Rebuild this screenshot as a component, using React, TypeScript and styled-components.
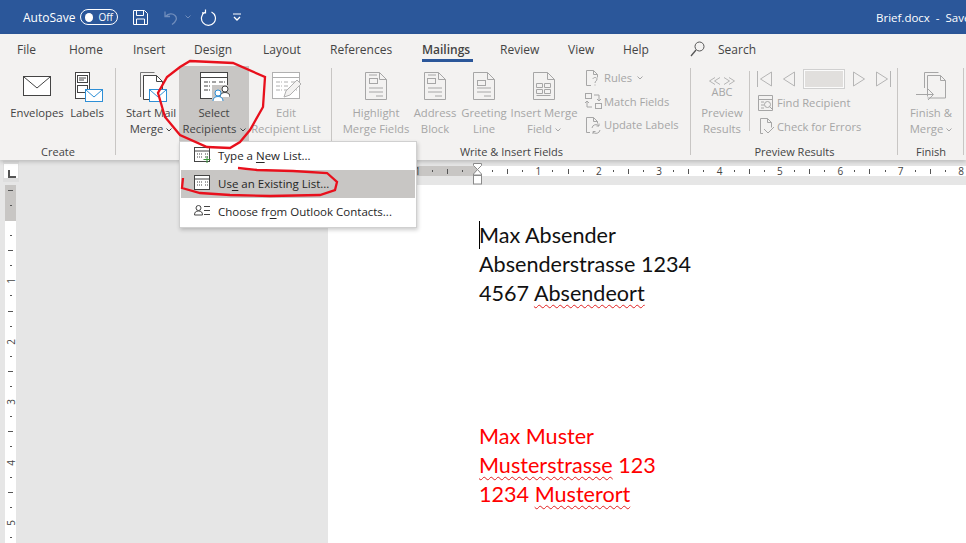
import React from "react";
import styled, { createGlobalStyle } from "styled-components";

const UI_FONT = `"Open Sans", "Noto Sans", sans-serif`;
const TEXT = "#444444";
const MUTED = "#a6a6a6";
const INCH = 60.4;

const GlobalStyle = createGlobalStyle`
  html, body {
    margin: 0;
    padding: 0;
    overflow: hidden;
    background: #e6e6e6;
  }
  * { box-sizing: border-box; }
`;

function EnvelopeIcon() {
  return (
    <svg width="32" height="32" viewBox="0 0 32 32" fill="none" stroke="#444">
      <rect x="2.5" y="6.5" width="27" height="19" fill="#fff" />
      <path d="M3 7l13 11L29 7" />
    </svg>
  );
}

function MiniEnvelope({ x, y }: { x: number; y: number }) {
  return (
    <g transform={`translate(${x} ${y})`}>
      <rect x="0.5" y="0.5" width="17" height="12" fill="#fff" stroke="#2e8fd6" />
      <path d="M1 1l8 7 8-7" stroke="#2e8fd6" fill="none" />
    </g>
  );
}

function LabelsIcon() {
  return (
    <svg width="32" height="32" viewBox="0 0 32 32" fill="none" stroke="#444">
      <rect x="4.5" y="2.5" width="14" height="26" fill="#fff" />
      <rect x="6.5" y="5.5" width="10" height="7" />
      <path d="M8 8h7M8 10h5" />
      <rect x="6.5" y="15.5" width="10" height="7" />
      <MiniEnvelope x={14} y={19} />
    </svg>
  );
}

function StartMergeIcon() {
  return (
    <svg width="32" height="32" viewBox="0 0 32 32" fill="none" stroke="#444">
      <path d="M5.5 27V2.5h14" stroke="#777" />
      <path d="M8.5 29.5V5.5h13l6 6v18z" fill="#fff" />
      <path d="M21.5 5.5v6h6" />
      <MiniEnvelope x={14} y={19} />
    </svg>
  );
}

function TableIcon({ color = "#444" }: { color?: string }) {
  return (
    <g stroke={color}>
      <rect x="2.5" y="2.5" width="27" height="26" fill="#fff" />
      <path d="M3 7.5h26" />
      <path d="M6 12h6M14 12h5M21 12h6M6 16h6M14 16h5M21 16h6M6 20h6M14 20h5M21 20h6" strokeDasharray="4 1" />
    </g>
  );
}

function SelectRecipientsIcon() {
  return (
    <svg width="32" height="32" viewBox="0 0 32 32" fill="none">
      <TableIcon />
      <rect x="14" y="15" width="18" height="17" fill="#c8c6c4" />
      <circle cx="27" cy="19" r="3" stroke="#444" fill="#fff" />
      <path d="M22 27c0-3 2-4.500 5-4.500s5 1.500 5 4.500" stroke="#444" fill="#fff" />
      <circle cx="20" cy="23" r="3" stroke="#2e8fd6" fill="#fff" />
      <path d="M15 31c0-3 2-4.500 5-4.500s5 1.500 5 4.500" stroke="#2e8fd6" fill="#fff" />
    </svg>
  );
}

function EditListIcon() {
  return (
    <svg width="32" height="32" viewBox="0 0 32 32" fill="none">
      <TableIcon color="#b0b0b0" />
      <path d="M14 27l2-6L27 10l4 4-11 11z" fill="#f3f2f1" stroke="#b0b0b0" />
    </svg>
  );
}

type FieldKind = "highlight" | "address" | "greeting" | "insert";

function FieldDocIcon({ kind }: { kind: FieldKind }) {
  return (
    <svg width="32" height="32" viewBox="0 0 32 32" fill="none" stroke="#a6a6a6">
      <path d="M5.500 29.500V2.500h14l7 7v20z" fill="#f3f2f1" />
      <path d="M19.500 2.500v7h7" />
      {kind === "insert" ? (
        <path d="M8.500 13.500h6v4h-6zM16.500 13.500h6v4h-6zM8.500 19.500h6v4h-6zM16.500 19.500h6v4h-6zM8.500 25.500h14" />
      ) : (
        <>
          <rect x={kind === "address" ? 8.5 : 9.5} y={kind === "greeting" ? 10.5 : 8.5} width="8" height="5" />
          <path d="M9 18h14M9 22h14M16 26h7" />
          {kind !== "greeting" && <path d="M9 5h8" />}
        </>
      )}
    </svg>
  );
}

function RulesIcon() {
  return (
    <svg width="18" height="18" viewBox="0 0 18 18" fill="none" stroke="#a6a6a6">
      <path d="M7 16.500H2.500V1.500h7l4 4v3M9.500 1.500v4h4" />
      <path d="M9 10c0-2 4-2 4 0 0 2-2 2-2 4M11 15.500v1" />
    </svg>
  );
}

function MatchIcon() {
  return (
    <svg width="18" height="18" viewBox="0 0 18 18" fill="none" stroke="#a6a6a6">
      <rect x="1.500" y="1.500" width="6" height="5" />
      <rect x="11.500" y="11.500" width="6" height="5" />
      <path d="M10 3h5v6M13 7l2 2 2-2M8 15H3V9M1 11l2-2 2 2" />
    </svg>
  );
}

function UpdateIcon() {
  return (
    <svg width="18" height="18" viewBox="0 0 18 18" fill="none" stroke="#a6a6a6">
      <path d="M6 16.500H2.500V1.500h7l4 4v2M9.500 1.500v4h4" />
      <path d="M8 12a4 4 0 0 1 7-2M16 14a4 4 0 0 1-7 2M15 7.500V10h-2.500M9 18v-2.500h2.500" />
    </svg>
  );
}

function FindIcon() {
  return (
    <svg width="18" height="18" viewBox="0 0 18 18" fill="none" stroke="#a6a6a6">
      <path d="M1.500 1.500h14v15h-14zM2 5.500h13" />
      <path d="M4 8h3M4 11h3M4 14h3" />
      <circle cx="10.500" cy="10.500" r="3" fill="#f3f2f1" />
      <path d="M12.500 12.500l3 3" />
    </svg>
  );
}

function CheckIcon() {
  return (
    <svg width="18" height="18" viewBox="0 0 18 18" fill="none" stroke="#a6a6a6">
      <path d="M6 16.500H3.500V1.500h7l4 4v5M10.500 1.500v4h4" />
      <path d="M7 12l4 4 6-6" />
    </svg>
  );
}

function FinishIcon() {
  return (
    <svg width="32" height="32" viewBox="0 0 32 32" fill="none" stroke="#a6a6a6">
      <path d="M9.500 18V2.500h14" />
      <path d="M12.500 26.500V5.500h13l5 5v17.500h-18" fill="#f3f2f1" />
      <path d="M25.500 5.500v5h5" />
      <path d="M1 24.500h17M13 19l5.500 5.500L13 30" />
    </svg>
  );
}

function NavArrow({ dir, bar }: { dir: "left" | "right"; bar?: boolean }) {
  const left = dir === "left";
  return (
    <svg width="16" height="18" viewBox="0 0 16 18" fill="none" stroke="#b5b5b5">
      {left ? <path d="M14.500 2v14L3.500 9z" /> : <path d="M1.500 2v14l11-7z" />}
      {bar && <path d={left ? "M0.500 1v16" : "M15.500 1v16"} />}
    </svg>
  );
}

function SmallTableIcon({ plus }: { plus?: boolean }) {
  return (
    <svg width="18" height="16" viewBox="0 0 18 16" fill="none" stroke="#444">
      <rect x="1.500" y="0.500" width="15" height="14" fill="#fff" />
      <path d="M2 4h14" />
      <path d="M4 7h3M8 7h2M12 7h3M4 10h3M8 10h2M12 10h3" strokeDasharray="1 1" />
      {plus && <path d="M14 9v7M10.500 12.500h7" stroke="#3a9a3a" />}
    </svg>
  );
}

function ContactsIcon() {
  return (
    <svg width="18" height="16" viewBox="0 0 18 16" fill="none" stroke="#444">
      <circle cx="5.500" cy="5" r="2.500" />
      <path d="M1.500 12c0-3 1.500-4 4-4s4 1 4 4z" />
      <path d="M11 3.500h6M11 7.500h6M11 11.500h6" />
    </svg>
  );
}

function PreviewChevrons() {
  return (
    <svg width="26" height="8" viewBox="0 0 26 8" fill="none" stroke="#b5b5b5">
      <path d="M6 0.500L0.500 4 6 7.500M11 0.500L5.500 4 11 7.500M15 0.500L20.500 4 15 7.500M20 0.500L25.500 4 20 7.500" />
    </svg>
  );
}

const Page = styled.div`
  position: relative;
  width: 966px;
  height: 543px;
  overflow: hidden;
  display: flex;
  flex-direction: column;
  font-family: ${UI_FONT};
  font-size: 12px;
  color: ${TEXT};
  background: #e6e6e6;
`;

const TitleBar = styled.div`
  flex: none;
  height: 34px;
  background: #2b579a;
  color: #fff;
  display: flex;
  align-items: center;
  padding-left: 23px;
  white-space: nowrap;
  overflow: hidden;
`;

const AutoSaveLabel = styled.span`
  width: 57px;
  font-size: 12px;
`;

const Toggle = styled.div`
  width: 38px;
  height: 16px;
  border: 1px solid #fff;
  border-radius: 8px;
  display: flex;
  align-items: center;
  padding: 0 4px;
  gap: 5px;
  font-size: 10px;
  margin-right: 14px;
  &::before {
    content: "";
    width: 9px;
    height: 9px;
    border-radius: 50%;
    background: #fff;
  }
`;

const QuickIcon = styled.svg<{ $gap: number }>`
  flex: none;
  margin-right: ${(p) => p.$gap}px;
`;

const DocTitle = styled.span`
  margin-left: auto;
  width: 90px;
  overflow: hidden;
  font-size: 11.5px;
`;

const Ribbon = styled.div`
  flex: none;
  height: 126px;
  background: #f3f2f1;
  box-shadow: 0 2px 4px rgba(0, 0, 0, 0.18);
  position: relative;
  z-index: 1;
`;

const TabRow = styled.div`
  height: 28px;
  display: flex;
  align-items: center;
`;

const Tab = styled.div<{ $width: number; $active?: boolean }>`
  flex: none;
  width: ${(p) => p.$width}px;
  height: 28px;
  line-height: 31px;
  font-size: 12px;
  font-weight: ${(p) => (p.$active ? 600 : 400)};
  white-space: nowrap;
  position: relative;
  ${(p) =>
    p.$active &&
    `&::after {
      content: "";
      position: absolute;
      left: 0;
      top: 25px;
      width: 51px;
      height: 3px;
      background: #2b579a;
    }`}
`;

const TabSpacer = styled.div`
  width: 17px;
`;

const SearchBox = styled.div`
  display: flex;
  align-items: center;
  gap: 13px;
  padding-top: 2px;
`;

const GroupRow = styled.div`
  display: flex;
  height: 98px;
`;

const Group = styled.div<{ $width: number }>`
  flex: none;
  width: ${(p) => p.$width}px;
  display: flex;
  flex-direction: column;
  position: relative;
  &::after {
    content: "";
    position: absolute;
    right: 0;
    top: 6px;
    bottom: 5px;
    width: 1px;
    background: #c8c6c4;
  }
`;

const GroupBody = styled.div<{ $pad?: number }>`
  flex: none;
  height: 82px;
  display: flex;
  padding-top: 4px;
  padding-left: ${(p) => p.$pad ?? 0}px;
`;

const GroupLabel = styled.div`
  text-align: center;
  font-size: 11px;
  line-height: 16px;
`;

const LargeButton = styled.div<{ $width: number; $disabled?: boolean; $active?: boolean; $gap?: number }>`
  flex: none;
  width: ${(p) => p.$width}px;
  height: 75px;
  margin-right: ${(p) => p.$gap ?? 0}px;
  padding-top: 4px;
  display: flex;
  flex-direction: column;
  align-items: center;
  text-align: center;
  font-size: 11.3px;
  line-height: 16px;
  white-space: nowrap;
  color: ${(p) => (p.$disabled ? MUTED : TEXT)};
  background: ${(p) => (p.$active ? "#c8c6c4" : "transparent")};
`;

const LargeIcon = styled.div`
  height: 35px;
  flex: none;
  display: flex;
  justify-content: center;
`;

const Chevron = styled.svg`
  margin-left: 3px;
  vertical-align: 1px;
`;

function Caret({ color = "#444" }: { color?: string }) {
  return (
    <Chevron width="6" height="4" viewBox="0 0 6 4" fill="none" stroke={color}>
      <path d="M0.500 0.500L3 3l2.500-2.500" />
    </Chevron>
  );
}

const SmallColumn = styled.div<{ $left: number }>`
  margin-left: ${(p) => p.$left}px;
  display: flex;
  flex-direction: column;
`;

const SmallButton = styled.div`
  height: 23.500px;
  display: flex;
  align-items: center;
  gap: 2px;
  color: ${MUTED};
  font-size: 11.200px;
  white-space: nowrap;
`;

const VerticalRule = styled.div`
  flex: none;
  width: 1px;
  height: 60px;
  margin: 5px 7px 0 0;
  background: #c8c6c4;
`;

const NavRow = styled.div`
  height: 25px;
  display: flex;
  align-items: center;
  gap: 7px;
`;

const RecordBox = styled.div`
  width: 42px;
  height: 20px;
  background: #e1dfdd;
  border: 2px solid #fbfbfb;
  outline: 1px solid #d0d0d0;
  outline-offset: -1px;
`;

const AbcStack = styled.div`
  display: flex;
  flex-direction: column;
  align-items: center;
  height: 35px;
  padding-top: 7px;
  gap: 1px;
  color: ${MUTED};
`;

const AbcText = styled.span`
  font-size: 11px;
  line-height: 12px;
`;

const Workspace = styled.div`
  flex: 1;
  display: grid;
  grid-template-columns: 328px 1fr;
  grid-template-rows: 25px 1fr;
  min-height: 0;
`;

const CornerCell = styled.div`
  padding: 1px 0 0 3px;
`;

const RulerCorner = styled.div`
  width: 16px;
  height: 21px;
  padding: 3px 1px;
  background: #dedede;
  &::before {
    content: "";
    display: block;
    height: 14px;
    background: #fff;
  }
  position: relative;
  &::after {
    content: "";
    position: absolute;
    left: 5px;
    top: 9px;
    width: 6px;
    height: 6px;
    border-left: 2px solid #555;
    border-bottom: 2px solid #555;
  }
`;

const HorizontalRuler = styled.div`
  position: relative;
  height: 10px;
  margin-top: 6px;
  display: flex;
  overflow: hidden;
  background: #fff;
`;

const RulerMargin = styled.div<{ $size: number; $vertical?: boolean }>`
  flex: none;
  display: flex;
  flex-direction: ${(p) => (p.$vertical ? "column" : "row")};
  justify-content: flex-end;
  overflow: hidden;
  background: #c8c6c4;
  ${(p) => (p.$vertical ? `height: ${p.$size}px;` : `width: ${p.$size}px;`)}
`;

const Slot = styled.div<{ $vertical?: boolean }>`
  flex: none;
  display: flex;
  align-items: ${(p) => (p.$vertical ? "flex-end" : "center")};
  justify-content: ${(p) => (p.$vertical ? "center" : "flex-end")};
  ${(p) => (p.$vertical ? `height: ${INCH / 4}px;` : `width: ${INCH / 4}px; height: 10px;`)}
`;

const TickMark = styled.span<{ $long?: boolean; $vertical?: boolean }>`
  flex: none;
  background: #555;
  ${(p) => {
    const length = p.$long ? 5 : 2;
    return p.$vertical ? `width: ${length}px; height: 1px;` : `width: 1px; height: ${length}px;`;
  }}
`;

const RulerNumber = styled.span<{ $vertical?: boolean }>`
  flex: none;
  font-size: 10px;
  line-height: 10px;
  color: #444;
  ${(p) =>
    p.$vertical
      ? `transform: rotate(-90deg); margin-bottom: -5px; width: 8px; text-align: center;`
      : `margin-right: -3px; width: 6px; text-align: center;`}
`;

function InchTicks({ end, vertical }: { end?: number; vertical?: boolean }) {
  return (
    <>
      <Slot $vertical={vertical}><TickMark $vertical={vertical} /></Slot>
      <Slot $vertical={vertical}><TickMark $vertical={vertical} $long /></Slot>
      <Slot $vertical={vertical}><TickMark $vertical={vertical} /></Slot>
      {end !== undefined && (
        <Slot $vertical={vertical}>
          <RulerNumber $vertical={vertical}>{end}</RulerNumber>
        </Slot>
      )}
    </>
  );
}

const IndentMarker = styled.svg`
  position: absolute;
  left: 473px;
  top: 163px;
  z-index: 1;
  display: block;
`;

const VerticalRulerColumn = styled.div`
  padding-left: 5px;
  overflow: hidden;
`;

const VerticalRuler = styled.div`
  width: 11px;
  height: 100%;
  background: #fff;
  display: flex;
  flex-direction: column;
  overflow: hidden;
`;

const DocPage = styled.div`
  position: relative;
  background: #fff;
  padding: 36px 0 0 151px;
  font-family: Lato, "Liberation Sans", sans-serif;
  font-size: 21.6px;
  line-height: 29px;
  color: #111;
`;

const Caretline = styled.div`
  position: absolute;
  left: 151px;
  top: 36px;
  width: 1px;
  height: 28px;
  background: #000;
`;

const AddressBlock = styled.div<{ $red?: boolean; $gap?: number }>`
  color: ${(p) => (p.$red ? "#ff0000" : "#111")};
  margin-top: ${(p) => p.$gap ?? 0}px;
`;

const Misspelled = styled.span`
  text-decoration: underline wavy #e02020 1px;
  text-underline-offset: 3px;
`;

const Menu = styled.div`
  position: absolute;
  left: 179px;
  top: 141px;
  width: 238px;
  height: 87px;
  padding: 0 1px;
  background: #fff;
  border: 1px solid #d0d0d0;
  box-shadow: 1px 2px 4px rgba(0, 0, 0, 0.2);
  z-index: 2;
  color: #262626;
`;

const MenuItem = styled.div<{ $active?: boolean }>`
  height: 28px;
  display: flex;
  align-items: center;
  padding: 0 0 2px 12px;
  gap: 7px;
  font-size: 11.500px;
  background: ${(p) => (p.$active ? "#c8c6c4" : "transparent")};
  white-space: nowrap;
  u {
    text-underline-offset: 2px;
  }
`;

const Annotation = styled.svg`
  position: absolute;
  left: 0;
  top: 0;
  z-index: 3;
  pointer-events: none;
`;

export default function App() {
  return (
    <Page>
      <GlobalStyle />
      <TitleBar>
        <AutoSaveLabel>AutoSave</AutoSaveLabel>
        <Toggle>Off</Toggle>
        <QuickIcon $gap={14} width="17" height="17" viewBox="0 0 17 17" fill="none" stroke="#fff">
          <path d="M1.500 1.500h11l3 3v11h-14z" />
          <path d="M4.500 2v4.500h7V2M4.500 15v-5h8v5" />
        </QuickIcon>
        <QuickIcon $gap={7} width="15" height="15" viewBox="0 0 15 15" fill="none" stroke="#6f8cbb" strokeWidth="1.300">
          <path d="M2 1.500v5h5M2.500 6.500c3-3 7-3.500 9.500-1 2.500 2.500 1.500 6-3 9" />
        </QuickIcon>
        <QuickIcon $gap={9} width="6" height="4" viewBox="0 0 6 4" fill="none" stroke="#6f8cbb">
          <path d="M0.500 0.500L3 3l2.500-2.500" />
        </QuickIcon>
        <QuickIcon $gap={16} width="17" height="17" viewBox="0 0 17 17" fill="none" stroke="#fff" strokeWidth="1.200">
          <path d="M5 3.200a7 7 0 1 0 6.500-.2M5.500 0.500v3.300h-3.500" />
        </QuickIcon>
        <QuickIcon $gap={0} width="8" height="8" viewBox="0 0 8 8" fill="none" stroke="#fff">
          <path d="M0 1h8" />
          <path d="M1 4l3 3 3-3" strokeWidth="1.300" />
        </QuickIcon>
        <DocTitle>Brief.docx&nbsp; - &nbsp;Saved</DocTitle>
      </TitleBar>

      <Ribbon>
        <TabRow>
          <TabSpacer />
          <Tab $width={52}>File</Tab>
          <Tab $width={64}>Home</Tab>
          <Tab $width={61}>Insert</Tab>
          <Tab $width={69}>Design</Tab>
          <Tab $width={67}>Layout</Tab>
          <Tab $width={92}>References</Tab>
          <Tab $width={78} $active>Mailings</Tab>
          <Tab $width={68}>Review</Tab>
          <Tab $width={55}>View</Tab>
          <Tab $width={67}>Help</Tab>
          <SearchBox>
            <svg width="15" height="16" viewBox="0 0 15 16" fill="none" stroke="#555">
              <circle cx="9.500" cy="5.500" r="4.500" />
              <path d="M6 9l-5 6" strokeWidth="1.300" />
            </svg>
            Search
          </SearchBox>
        </TabRow>

        <GroupRow>
          <Group $width={116}>
            <GroupBody $pad={8}>
              <LargeButton $width={58}>
                <LargeIcon><EnvelopeIcon /></LargeIcon>
                Envelopes
              </LargeButton>
              <LargeButton $width={42}>
                <LargeIcon><LabelsIcon /></LargeIcon>
                Labels
              </LargeButton>
            </GroupBody>
            <GroupLabel>Create</GroupLabel>
          </Group>

          <Group $width={216}>
            <GroupBody $pad={10}>
              <LargeButton $width={50} $gap={3}>
                <LargeIcon><StartMergeIcon /></LargeIcon>
                Start Mail
                <br />
                <span>Merge<Caret /></span>
              </LargeButton>
              <LargeButton $width={70} $active>
                <LargeIcon><SelectRecipientsIcon /></LargeIcon>
                Select
                <br />
                <span>Recipients<Caret /></span>
              </LargeButton>
              <LargeButton $width={74} $disabled>
                <LargeIcon><EditListIcon /></LargeIcon>
                Edit
                <br />
                Recipient List
              </LargeButton>
            </GroupBody>
          </Group>

          <Group $width={359}>
            <GroupBody $pad={6}>
              <LargeButton $width={76} $disabled>
                <LargeIcon><FieldDocIcon kind="highlight" /></LargeIcon>
                Highlight
                <br />
                Merge Fields
              </LargeButton>
              <LargeButton $width={42} $disabled>
                <LargeIcon><FieldDocIcon kind="address" /></LargeIcon>
                Address
                <br />
                Block
              </LargeButton>
              <LargeButton $width={56} $disabled>
                <LargeIcon><FieldDocIcon kind="greeting" /></LargeIcon>
                Greeting
                <br />
                Line
              </LargeButton>
              <LargeButton $width={64} $disabled>
                <LargeIcon><FieldDocIcon kind="insert" /></LargeIcon>
                Insert Merge
                <br />
                <span>Field<Caret color={MUTED} /></span>
              </LargeButton>
              <SmallColumn $left={8}>
                <SmallButton><RulesIcon />Rules<Caret color={MUTED} /></SmallButton>
                <SmallButton><MatchIcon />Match Fields</SmallButton>
                <SmallButton><UpdateIcon />Update Labels</SmallButton>
              </SmallColumn>
            </GroupBody>
            <GroupLabel>Write &amp; Insert Fields</GroupLabel>
          </Group>

          <Group $width={207}>
            <GroupBody $pad={4}>
              <LargeButton $width={54} $disabled>
                <AbcStack>
                  <PreviewChevrons />
                  <AbcText>ABC</AbcText>
                </AbcStack>
                Preview
                <br />
                Results
              </LargeButton>
              <VerticalRule />
              <SmallColumn $left={0}>
                <NavRow>
                  <NavArrow dir="left" bar />
                  <NavArrow dir="left" />
                  <RecordBox />
                  <NavArrow dir="right" />
                  <NavArrow dir="right" bar />
                </NavRow>
                <SmallButton><FindIcon />Find Recipient</SmallButton>
                <SmallButton><CheckIcon />Check for Errors</SmallButton>
              </SmallColumn>
            </GroupBody>
            <GroupLabel>Preview Results</GroupLabel>
          </Group>

          <Group $width={66}>
            <GroupBody $pad={6}>
              <LargeButton $width={54} $disabled>
                <LargeIcon><FinishIcon /></LargeIcon>
                Finish &amp;
                <br />
                <span>Merge<Caret color={MUTED} /></span>
              </LargeButton>
            </GroupBody>
            <GroupLabel>Finish</GroupLabel>
          </Group>
        </GroupRow>
      </Ribbon>

      <Workspace>
        <CornerCell>
          <RulerCorner />
        </CornerCell>
        <div>
          <HorizontalRuler>
            <RulerMargin $size={150}>
              <Slot><RulerNumber>1</RulerNumber></Slot>
              <InchTicks />
              <Slot />
            </RulerMargin>
            <InchTicks end={1} />
            <InchTicks end={2} />
            <InchTicks end={3} />
            <InchTicks end={4} />
            <InchTicks end={5} />
            <InchTicks end={6} />
            <InchTicks end={7} />
            <InchTicks end={8} />
          </HorizontalRuler>
        </div>
        <VerticalRulerColumn>
          <VerticalRuler>
            <RulerMargin $size={36} $vertical>
              <InchTicks vertical />
              <Slot $vertical />
            </RulerMargin>
            {[1, 2, 3, 4, 5, 6].map((n) => (
              <InchTicks key={n} end={n} vertical />
            ))}
          </VerticalRuler>
        </VerticalRulerColumn>
        <DocPage>
          <Caretline />
          <AddressBlock>Max Absender</AddressBlock>
          <AddressBlock>Absenderstrasse 1234</AddressBlock>
          <AddressBlock>
            4567 <Misspelled>Absendeort</Misspelled>
          </AddressBlock>
          <AddressBlock $red $gap={114}>Max Muster</AddressBlock>
          <AddressBlock $red><Misspelled>Musterstrasse</Misspelled> 123</AddressBlock>
          <AddressBlock $red>1234 <Misspelled>Musterort</Misspelled></AddressBlock>
        </DocPage>
      </Workspace>

      <Menu>
        <MenuItem>
          <SmallTableIcon plus />
          <span>Type a <u>N</u>ew List...</span>
        </MenuItem>
        <MenuItem $active>
          <SmallTableIcon />
          <span>Us<u>e</u> an Existing List...</span>
        </MenuItem>
        <MenuItem>
          <ContactsIcon />
          <span>Choose fr<u>o</u>m Outlook Contacts...</span>
        </MenuItem>
      </Menu>

      <IndentMarker width="10" height="22" viewBox="0 0 10 22" fill="#fff" stroke="#8a8a8a">
        <path d="M0.500 0.500h8v2L4.500 6.500l4 4.500v1h-8v-1l4-4.500-4-4z" />
        <rect x="0.500" y="12.500" width="8" height="8.500" />
      </IndentMarker>

      <Annotation width="966" height="543" viewBox="0 0 966 543" fill="none" stroke="#e8101c" strokeWidth="2.300">
        <path d="M190 61L233 63L265 77L263 107L250 130L240 142L230 148L207 147L180 135L165 117L158 93L167 77L180 67z" />
        <path d="M183 178L182 188L200 193L230 195L270 196L320 195L335 190L337 182L327 173L293 171L257 170L238 168" />
      </Annotation>
    </Page>
  );
}
